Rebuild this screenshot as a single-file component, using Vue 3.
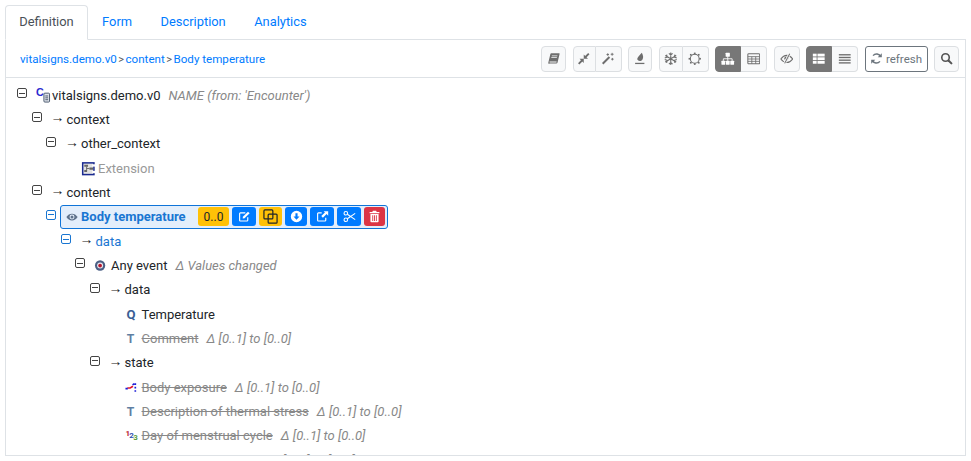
<template>
  <div class="page">
    <ul class="tabs">
      <li v-for="(tab, i) in tabs" :key="tab" :class="['tab', { active: i === 0 }]">{{ tab }}</li>
    </ul>

    <div class="panel">
      <div class="toolbar">
        <div class="crumbs">
          <a>vitalsigns.demo.v0</a><span class="sep">&gt;</span><a>content</a><span class="sep">&gt;</span><a>Body temperature</a>
        </div>
        <div class="tools">
          <div v-for="(group, g) in toolGroups" :key="g" class="group">
            <button
              v-for="b in group"
              :key="b.icon"
              :class="['tool', { on: b.on }]"
              :style="{ width: b.w + 'px' }"
            >
              <svg class="ic" viewBox="0 0 16 16" v-html="icons[b.icon]"></svg>
            </button>
          </div>
          <button class="refresh">
            <svg class="ic small" viewBox="0 0 16 16" v-html="icons.refresh"></svg>
            <span>refresh</span>
          </button>
          <div class="group">
            <button class="tool search-btn">
              <svg class="ic small dark" viewBox="0 0 16 16" v-html="icons.search"></svg>
            </button>
          </div>
        </div>
      </div>

      <div class="tree">
        <div
          v-for="row in rows"
          :key="row.id"
          class="row"
          :style="{ paddingLeft: 11 + row.depth * 14.5 + 'px' }"
        >
          <span class="toggle-slot">
            <span v-if="row.open" :class="['toggle', { blue: row.blue }]"></span>
          </span>

          <div v-if="row.selected" class="selected">
            <svg class="eye" viewBox="0 0 16 16" v-html="icons.eye"></svg>
            <span class="sel-name">{{ row.name }}</span>
            <span
              v-for="a in actions"
              :key="a.icon"
              :class="['act', a.kind]"
              :style="{ width: a.w + 'px' }"
            >
              <span v-if="a.label">{{ a.label }}</span>
              <svg v-else :class="['act-ic', a.icon]" viewBox="0 0 16 16" v-html="icons[a.icon]"></svg>
            </span>
          </div>

          <template v-else>
            <span :class="['type-slot', { leaf: !row.open }, { event: row.icon === 'event' }]">
              <span v-if="row.arrow" class="arrow">→</span>
              <svg v-else class="type" viewBox="0 0 16 16" v-html="icons[row.icon]"></svg>
            </span>
            <span :class="['name', { link: row.blue, muted: row.muted, gone: row.gone }]">{{ row.name }}</span>
            <span v-if="row.note" class="note">{{ row.note }}</span>
          </template>
        </div>
      </div>
    </div>
  </div>
</template>

<script setup>
const tabs = ['Definition', 'Form', 'Description', 'Analytics']

const toolGroups = [
  [{ icon: 'book', w: 25 }],
  [{ icon: 'compress', w: 23 }, { icon: 'wand', w: 26 }],
  [{ icon: 'tint', w: 24 }],
  [{ icon: 'snow', w: 24 }, { icon: 'sun', w: 26 }],
  [{ icon: 'sitemap', w: 26, on: true }, { icon: 'table', w: 26 }],
  [{ icon: 'eyeoff', w: 26 }],
  [{ icon: 'thlist', w: 26, on: true }, { icon: 'lines', w: 26 }]
]

const actions = [
  { icon: 'occ', w: 31, kind: 'warn', label: '0..0' },
  { icon: 'edit', w: 24, kind: 'pri' },
  { icon: 'copy', w: 23, kind: 'warn' },
  { icon: 'down', w: 22, kind: 'pri' },
  { icon: 'ext', w: 24, kind: 'pri' },
  { icon: 'cut', w: 24, kind: 'pri' },
  { icon: 'trash', w: 21, kind: 'dan' }
]

const delta = 'Δ [0..1] to [0..0]'

const rows = [
  { id: 1, depth: 0, open: true, icon: 'cdoc', name: 'vitalsigns.demo.v0', note: "NAME (from: 'Encounter')" },
  { id: 2, depth: 1, open: true, arrow: true, name: 'context' },
  { id: 3, depth: 2, open: true, arrow: true, name: 'other_context' },
  { id: 4, depth: 3, icon: 'extension', name: 'Extension', muted: true },
  { id: 5, depth: 1, open: true, arrow: true, name: 'content' },
  { id: 6, depth: 2, open: true, blue: true, selected: true, name: 'Body temperature' },
  { id: 7, depth: 3, open: true, blue: true, arrow: true, name: 'data' },
  { id: 8, depth: 4, open: true, icon: 'event', name: 'Any event', note: 'Δ Values changed' },
  { id: 9, depth: 5, open: true, arrow: true, name: 'data' },
  { id: 10, depth: 6, icon: 'qty', name: 'Temperature' },
  { id: 11, depth: 6, icon: 'txt', name: 'Comment', gone: true, note: delta },
  { id: 12, depth: 5, open: true, arrow: true, name: 'state' },
  { id: 13, depth: 6, icon: 'choice', name: 'Body exposure', gone: true, note: delta },
  { id: 14, depth: 6, icon: 'txt', name: 'Description of thermal stress', gone: true, note: delta },
  { id: 15, depth: 6, icon: 'count', name: 'Day of menstrual cycle', gone: true, note: delta },
  { id: 16, depth: 6, icon: 'txt', name: 'Site of measurement', gone: true, note: delta }
]

// icon bodies, all drawn on a 16x16 box
const icons = {
  book: '<path fill="currentColor" d="M5 1.500h9.200c.6 0 .9.5.7 1l-2.400 9.800c-.2.7-.7 1.200-1.500 1.200H3.200C2 14.500 1.300 13.400 1.600 12.300L4 2.500c.2-.6.5-1 1-1z"/><path fill="#f8f9fa" d="M5.800 4h6.600l-.2.9H5.600zM5.200 6.200h6.600l-.2.9H5zM3.400 11.400h8l-.2.9H3.300c-.5 0-.5-.9.100-.9z"/>',
  compress: '<path fill="none" stroke="currentColor" stroke-width="2.200" d="M2 14 6.500 9.500M14 2 9.500 6.500"/><path fill="currentColor" d="M3 8h5v5zM13 8H8V3z"/>',
  wand: '<path fill="none" stroke="currentColor" stroke-width="2.400" d="M2 14 10 6"/><path fill="none" stroke="currentColor" stroke-width="1.100" d="M8 1.500v3M6.500 3h3M13.200 1v3.400M11.500 2.700h3.400M13.500 7v3M12 8.500h3"/>',
  tint: '<path fill="currentColor" d="M10.500 1c1.600 3.200 2.200 5.800.6 8.200-1.300 1.900-4.200 1.900-5.500.4C4.100 7.900 6.400 5.400 10.500 1z"/><rect fill="currentColor" x="2.500" y="12.800" width="11" height="1.500"/>',
  snow: '<path fill="none" stroke="currentColor" stroke-width="1.300" d="M8 .5v15M1.500 4.200l13 7.600M14.500 4.200l-13 7.600M5.800 1.600 8 3.500l2.200-1.900M5.800 14.400 8 12.500l2.200 1.900M.9 7 3.700 6 3.100 3.100M15.100 9 12.300 10l.6 2.900M15.100 7 12.300 6l.6-2.900M.9 9 3.700 10l-.6 2.900"/>',
  sun: '<circle cx="8" cy="8" r="5.200" fill="none" stroke="currentColor" stroke-width="1.200"/><g fill="currentColor"><rect x="7" y=".7" width="2" height="2"/><rect x="7" y="13.300" width="2" height="2"/><rect x=".7" y="7" width="2" height="2"/><rect x="13.300" y="7" width="2" height="2"/><rect x="2.300" y="2.300" width="2" height="2"/><rect x="11.700" y="2.300" width="2" height="2"/><rect x="2.300" y="11.700" width="2" height="2"/><rect x="11.700" y="11.700" width="2" height="2"/></g>',
  sitemap: '<g fill="currentColor"><rect x="5.500" y="1" width="5" height="4.500" rx=".5"/><rect x=".5" y="10.500" width="4.500" height="4.500" rx=".5"/><rect x="5.800" y="10.500" width="4.500" height="4.500" rx=".5"/><rect x="11" y="10.500" width="4.500" height="4.500" rx=".5"/></g><path fill="none" stroke="currentColor" d="M8 5v5.500M2.800 10.500V8h10.400v2.500"/>',
  table: '<rect x="1" y="2" width="14" height="12" rx="1" fill="none" stroke="currentColor" stroke-width="1.200"/><path fill="none" stroke="currentColor" d="M1 5.500h14M1 8.300h14M1 11.100h14M5.700 5.500V14M10.300 5.500V14"/>',
  eyeoff: '<path fill="none" stroke="currentColor" stroke-width="1.200" d="M1 8.300C3 5.500 5.500 4 8 4c2.500 0 5 1.500 7 4.300C13 11 10.500 12.500 8 12.500c-2.500 0-5-1.500-7-4.200z"/><circle cx="7.500" cy="7.700" r="2.400" fill="currentColor"/><path fill="none" stroke="#f8f9fa" stroke-width="3" d="M11.500 2 5 14"/><path fill="none" stroke="currentColor" stroke-width="1.200" d="M11.500 2 5.500 13.500"/>',
  thlist: '<g fill="currentColor"><rect x="1" y="2" width="4.500" height="3.300"/><rect x="6.500" y="2" width="8.500" height="3.300"/><rect x="1" y="6.300" width="4.500" height="3.300"/><rect x="6.500" y="6.300" width="8.500" height="3.300"/><rect x="1" y="10.600" width="4.500" height="3.300"/><rect x="6.500" y="10.600" width="8.500" height="3.300"/></g>',
  lines: '<g fill="currentColor"><rect x="1" y="2.500" width="14" height="1.600"/><rect x="1" y="5.700" width="14" height="1.600"/><rect x="1" y="8.900" width="14" height="1.600"/><rect x="1" y="12.100" width="14" height="1.600"/></g>',
  refresh: '<path fill="none" stroke="currentColor" stroke-width="1.800" d="M13.200 5.800A5.500 5.500 0 0 0 3.800 4.500M2.800 10.200a5.500 5.500 0 0 0 9.400 1.300"/><path fill="currentColor" d="M14.500 1.500v5h-5zM1.500 14.500v-5h5z"/>',
  search: '<circle cx="6.800" cy="6.800" r="4.600" fill="none" stroke="currentColor" stroke-width="2"/><path fill="none" stroke="currentColor" stroke-width="2.600" stroke-linecap="round" d="M10.500 10.500 14 14"/>',
  eye: '<path fill="currentColor" fill-rule="evenodd" d="M.5 8C2.300 5 5 3.500 8 3.500S13.700 5 15.500 8c-1.800 3-4.500 4.500-7.500 4.500S2.300 11 .5 8zm7.500 3.300a3.300 3.300 0 1 0 0-6.600 3.300 3.300 0 0 0 0 6.600z"/><circle cx="8" cy="8" r="2" fill="currentColor"/>',
  edit: '<path fill="none" stroke="currentColor" stroke-width="1.400" d="M12 9v3.500c0 .6-.4 1-1 1H3c-.6 0-1-.4-1-1v-8c0-.6.4-1 1-1h6"/><path fill="currentColor" d="M6 8.200 12.300 2l2 2-6.200 6.300-2.300.3z"/>',
  copy: '<g fill="none" stroke="currentColor" stroke-width="1.300"><rect x="1" y="1" width="9.500" height="9.500" rx="1"/><rect x="5.500" y="5.500" width="9.500" height="9.500" rx="1"/></g>',
  down: '<path fill="currentColor" fill-rule="evenodd" d="M8 1a7 7 0 1 1 0 14A7 7 0 0 1 8 1zM6.700 4v4H4.300L8 12l3.700-4H9.300V4z"/>',
  ext: '<path fill="none" stroke="currentColor" stroke-width="1.400" d="M12 9.500v3c0 .6-.4 1-1 1H3c-.6 0-1-.4-1-1v-8c0-.6.4-1 1-1h4"/><path fill="currentColor" d="M9.500 1.500H15V7l-2-2-4.500 4.500-2-2L11 3z"/>',
  cut: '<g fill="none" stroke="currentColor" stroke-width="1.300"><circle cx="3.500" cy="4" r="2.200"/><circle cx="3.500" cy="12" r="2.200"/><path d="M5.300 5.200 15 11.800M5.300 10.800 15 4.200"/></g>',
  trash: '<path fill="currentColor" fill-rule="evenodd" d="M6 1h4l.7 1.500H14V4H2V2.500h3.300zM3 5h10v9c0 .6-.4 1-1 1H4c-.6 0-1-.4-1-1zm2.300 1.500v7h1.100v-7zm2.200 0v7h1.100v-7zm2.200 0v7h1.100v-7z"/>',
  cdoc: '<text x="1" y="8" font-family="Liberation Sans" font-weight="700" font-size="11.500" fill="#2a2ad0">C</text><rect x="9.500" y="5.500" width="6" height="9.500" rx="1" fill="#dfe3ea" stroke="#44546a"/><path stroke="#44546a" fill="none" d="M11 8.500h3M11 10.500h3M11 12.500h3"/>',
  extension: '<rect x="1.800" y="2" width="12" height="12.500" fill="#e2e2e2" stroke="#1a2a90" stroke-width="1.600"/><path fill="#666" d="M3.500 4h4v2.200h-4zM3.500 9.500h3v2.200h-3zM9 7h4v2.200H9z"/><path stroke="#666" fill="none" d="M6 6v4M6 8h3"/><rect x="12" y="3.500" width="3" height="2.500" fill="#fff"/><rect x="12" y="10.500" width="3" height="2.500" fill="#fff"/>',
  event: '<circle cx="6.500" cy="8" r="5.500" fill="#4a5f85"/><circle cx="6.500" cy="8" r="3.200" fill="#e8e8ee"/><circle cx="6.500" cy="8" r="2" fill="#b5172e"/>',
  qty: '<text x="6.500" y="12.800" text-anchor="middle" font-family="Roboto" font-weight="700" font-size="14" fill="#3b5f96">Q</text>',
  txt: '<text x="6" y="12.800" text-anchor="middle" font-family="Roboto" font-weight="700" font-size="13" fill="#5f7fa3">T</text>',
  choice: '<path stroke="#e0142c" stroke-width="1.800" fill="none" d="M2.500 8.500h3l3-1.800"/><path stroke="#1c1cd8" stroke-width="1.800" fill="none" d="M.5 9.200h2.500M11 3.500v1.800M11 7.200v1.800M11 10.800v1.800M8 5.200l2-1.200"/>',
  count: '<text x=".5" y="8" font-family="Roboto" font-weight="700" font-size="8.500" fill="#b8202c">1</text><text x="4.500" y="10.500" font-family="Roboto" font-weight="700" font-size="8.500" fill="#2c4fb0">2</text><text x="8.800" y="13" font-family="Roboto" font-weight="700" font-size="8.500" fill="#5c9c3c">3</text>'
}
</script>

<style scoped>
.page {
  box-sizing: border-box;
  height: 461px;
  padding: 5px;
  display: flex;
  flex-direction: column;
  font-family: Roboto, "Liberation Sans", sans-serif;
  font-size: 13px;
  color: #212529;
  overflow: hidden;
}

.tabs {
  display: flex;
  margin: 0;
  padding: 0;
  list-style: none;
  height: 35px;
  flex: none;
}

.tab {
  box-sizing: border-box;
  height: 35px;
  padding: 0 13.2px;
  line-height: 31px;
  font-size: 12.9px;
  color: #007bff;
  border: 1px solid transparent;
  border-radius: 4px 4px 0 0;
}

.tab.active {
  color: #495057;
  background: #fff;
  border-color: #dee2e6 #dee2e6 #fff;
  position: relative;
  z-index: 1;
}

.panel {
  flex: 1;
  min-height: 0;
  margin-top: -1px;
  border: 1px solid #dee2e6;
  display: flex;
  flex-direction: column;
  overflow: hidden;
}

.toolbar {
  flex: none;
  box-sizing: border-box;
  height: 38px;
  display: flex;
  align-items: center;
  justify-content: space-between;
  padding: 0 6px 0 14px;
  border-bottom: 1px solid #dee2e6;
}

.crumbs {
  font-size: 11.6px;
  color: #007bff;
}

.sep {
  color: #555;
  margin: 0 1.5px;
  font-size: 11px;
}

.tools {
  display: flex;
  gap: 6.5px;
}

.group {
  display: flex;
}

.tool {
  box-sizing: border-box;
  height: 26px;
  padding: 0;
  display: flex;
  align-items: center;
  justify-content: center;
  background: #f8f9fa;
  color: #6e6e6e;
  border: 1px solid #dcdfe2;
  border-radius: 0;
}

.tool + .tool {
  border-left: 0;
}

.search-btn {
  width: 25px;
}

.group .tool:first-child {
  border-top-left-radius: 4px;
  border-bottom-left-radius: 4px;
}

.group .tool:last-child {
  border-top-right-radius: 4px;
  border-bottom-right-radius: 4px;
}

.tool.on {
  background: #777;
  border-color: #777;
  color: #fff;
}

.ic {
  width: 13.5px;
  height: 13.5px;
}

.ic.small {
  width: 13px;
  height: 13px;
}

.ic.dark {
  color: #555;
}

.refresh {
  box-sizing: border-box;
  width: 63px;
  height: 26px;
  padding: 0;
  display: flex;
  align-items: center;
  justify-content: center;
  gap: 3px;
  background: #fff;
  color: #6c757d;
  border: 1px solid #6c757d;
  border-radius: 3px;
  font: 11.5px Roboto, sans-serif;
}

.tree {
  flex: 1;
  padding-top: 5px;
  overflow: hidden;
}

.row {
  display: flex;
  align-items: center;
  height: 24.33px;
  white-space: nowrap;
}

.toggle-slot {
  flex: none;
  width: 10px;
  height: 10px;
  margin-top: -4px;
}

.toggle {
  display: block;
  box-sizing: border-box;
  width: 10px;
  height: 10px;
  border: 1px solid #444;
  border-radius: 2px;
  background: linear-gradient(#444, #444) center / 6px 1px no-repeat;
}

.toggle.blue {
  border-color: #1976d2;
  background-image: linear-gradient(#1976d2, #1976d2);
}

.type-slot {
  flex: none;
  width: 25px;
  display: flex;
  justify-content: flex-end;
  padding-right: 2px;
  box-sizing: border-box;
}

.type-slot.leaf {
  width: 27.5px;
}

.type-slot.event {
  width: 26px;
}

.arrow {
  font-size: 14px;
  line-height: 14px;
  color: #222;
  width: 13px;
  text-align: left;
  margin-right: 1px;
  margin-top: -4px;
}

.type {
  width: 15px;
  height: 15px;
  overflow: visible;
}

.name.link {
  color: #1976d2;
}

.name.muted {
  color: #999;
}

.name.gone {
  color: #888;
  text-decoration: line-through;
}

.note {
  margin-left: 8px;
  font-style: italic;
  color: #888;
}

.selected {
  box-sizing: border-box;
  display: flex;
  align-items: center;
  height: 24px;
  width: 328px;
  margin-left: 4px;
  padding-left: 5px;
  background: #e3eefb;
  border: 1px solid #0f74d8;
  border-radius: 3px;
  gap: 3px;
}

.eye {
  width: 12px;
  height: 12px;
  color: #60738c;
  flex: none;
}

.sel-name {
  font-weight: 700;
  color: #1976d2;
  width: 114px;
  flex: none;
}

.act {
  box-sizing: border-box;
  height: 19px;
  display: flex;
  align-items: center;
  justify-content: center;
  border-radius: 3px;
  font-size: 12px;
  flex: none;
}

.act.pri {
  background: #007bff;
  color: #fff;
}

.act.warn {
  background: #ffc107;
  color: #212529;
}

.act.dan {
  background: #dc3545;
  color: #fff;
}

.act-ic {
  width: 13px;
  height: 13px;
}

.act-ic.copy {
  width: 15px;
  height: 15px;
}
</style>
